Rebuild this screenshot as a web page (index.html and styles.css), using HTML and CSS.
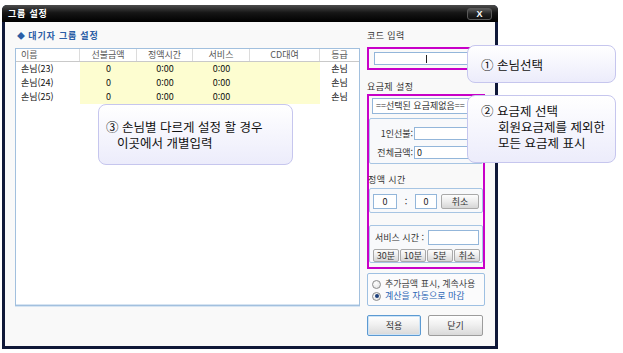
FILE: index.html
```html
<!DOCTYPE html>
<html lang="ko">
<head>
<meta charset="utf-8">
<title>그룹 설정</title>
<link rel="stylesheet" href="styles.css">
</head>
<body>
<div class="page">
  <div class="dialog">
    <div class="titlebar">
      <span class="title">그룹 설정</span>
      <span class="close">X</span>
    </div>
    <div class="body">
      <div class="left">
        <div class="section-title"><span class="diamond">◆</span> 대기자 그룹 설정</div>
        <div class="table">
          <div class="thead">
            <div class="th name">이름</div>
            <div class="th">선불금액</div>
            <div class="th">정액시간</div>
            <div class="th">서비스</div>
            <div class="th">CD대여</div>
            <div class="th last">등급</div>
          </div>
          <div class="row">
            <div class="td name">손님(23)</div>
            <div class="td y">0</div>
            <div class="td y">0:00</div>
            <div class="td y">0:00</div>
            <div class="td y"></div>
            <div class="td">손님</div>
          </div>
          <div class="row">
            <div class="td name">손님(24)</div>
            <div class="td y">0</div>
            <div class="td y">0:00</div>
            <div class="td y">0:00</div>
            <div class="td y"></div>
            <div class="td">손님</div>
          </div>
          <div class="row">
            <div class="td name">손님(25)</div>
            <div class="td y">0</div>
            <div class="td y">0:00</div>
            <div class="td y">0:00</div>
            <div class="td y"></div>
            <div class="td">손님</div>
          </div>
        </div>
      </div>
      <div class="right">
        <div class="label">코드 입력</div>
        <div class="hl code-box"><div class="input code-input"><span class="caret"></span></div></div>
        <div class="label plan-label">요금제 설정</div>
        <div class="hl plan-box">
          <div class="select">==선택된 요금제없음==<span class="arrow">▼</span></div>
          <div class="group amounts">
            <div class="field"><span class="flabel">1인선불:</span><span class="input wide"></span></div>
            <div class="field"><span class="flabel">전체금액:</span><span class="input wide">0</span></div>
          </div>
          <div class="label fixed-label">정액 시간</div>
          <div class="group fixed">
            <span class="input num n1">0</span><span class="colon">:</span><span class="input num n2">0</span><span class="btn cancel">취소</span>
          </div>
          <div class="group service">
            <div class="service-row"><span class="slabel">서비스 시간 :</span><span class="input sinput"></span></div>
            <div class="btn-row"><span class="btn">30분</span><span class="btn">10분</span><span class="btn">5분</span><span class="btn">취소</span></div>
          </div>
        </div>
        <div class="group radios">
          <div class="radio-row"><span class="radio"></span><span class="rtext">추가금액 표시, 계속사용</span></div>
          <div class="radio-row"><span class="radio checked"></span><span class="rtext blue">계산을 자동으로 마감</span></div>
        </div>
        <div class="actions">
          <span class="bigbtn focus">적용</span>
          <span class="bigbtn">닫기</span>
        </div>
      </div>
    </div>
  </div>

  <div class="callout c1">
    <div class="line">① 손님선택</div>
  </div>
  <div class="callout c2">
    <div class="line">② 요금제 선택</div>
    <div class="line ind">회원요금제를 제외한</div>
    <div class="line ind">모든 요금제 표시</div>
  </div>
  <div class="callout c3">
    <div class="line">③ 손님별 다르게 설정 할 경우</div>
    <div class="line ind">이곳에서 개별입력</div>
  </div>
</div>
</body>
</html>
```

FILE: styles.css
```css
* { box-sizing: border-box; }
html, body { margin: 0; padding: 0; background: #fff; }
body {
  font-family: "Noto Sans CJK KR", "Noto Sans", sans-serif;
  font-size: 9px;
  color: #222;
}
.page {
  position: relative;
  width: 623px;
  height: 353px;
  padding: 5px 0 0 2px;
}

/* dialog frame */
.dialog {
  width: 496px;
  height: 344px;
  background: #0f1838;
  border-radius: 5px 5px 0 0;
  padding: 0 3px 3px 3px;
  display: flex;
  flex-direction: column;
}
.titlebar {
  height: 17px;
  margin: 0 -3px;
  padding: 0 6px 0 6px;
  display: flex;
  align-items: center;
  justify-content: space-between;
  background: linear-gradient(#4c4c4c, #161616 45%, #000);
  border-radius: 5px 5px 0 0;
}
.title {
  color: #fff;
  font-weight: bold;
  font-size: 9px;
  line-height: 12px;
  letter-spacing: 0.8px;
}
.close {
  width: 25px;
  height: 12px;
  border: 1px solid #5a5a5a;
  border-radius: 3px;
  background: linear-gradient(#5a5a5a, #222 50%, #111);
  color: #fff;
  font-weight: bold;
  font-family: "Liberation Sans", sans-serif;
  font-size: 9px;
  line-height: 10px;
  text-align: center;
}
.body {
  flex: 1;
  background: #f9f9f9;
  display: grid;
  grid-template-columns: 345px 118px;
  column-gap: 7px;
  padding: 7px 10px 0 10px;
  align-items: start;
}

/* left: list */
.section-title {
  line-height: 14px;
  color: #2b5ea6;
  font-weight: bold;
  padding-left: 2px;
  letter-spacing: 0.8px;
}
.diamond { font-size: 8px; letter-spacing: 0; }
.table {
  margin-top: 5px;
  height: 258px;
  background: #fff;
  border: 1px solid #a2c0de;
  box-shadow: inset 0 -1px 0 #d6e4f2, 0 1px 0 #d6e4f2;
}
.thead, .row {
  display: grid;
  grid-template-columns: 64px 57px 56px 57px 70px 1fr;
}
.thead {
  height: 13px;
  border-bottom: 1px solid #c9c9c9;
}
.th {
  line-height: 12px;
  text-align: center;
  color: #555;
  border-right: 1px solid #dcdcdc;
}
.th.last { border-right: 0; }
.th.name, .td.name { text-align: left; padding-left: 5px; }
.row { height: 14px; }
.td {
  line-height: 14px;
  text-align: center;
  color: #111;
}
.td.y { background: #fdfdd0; }

/* right panel */
.label {
  line-height: 14px;
  color: #333;
  letter-spacing: 0.4px;
}
.hl {
  border: 2px solid #c800c8;
}
.code-box {
  margin-top: 4px;
  height: 23px;
  padding: 3px 5px;
}
.input {
  display: block;
  background: #fff;
  border: 1px solid #93b6da;
  height: 13px;
  line-height: 11px;
  padding-left: 2px;
  color: #222;
}
.code-input {
  display: flex;
  justify-content: center;
  align-items: center;
  padding-left: 0;
}
.caret {
  width: 1px;
  height: 8px;
  background: #222;
}
.plan-label { margin-top: 10px; }
.plan-box {
  height: 175px;
  padding: 2px 0 4px 0;
  display: flex;
  flex-direction: column;
}
.select {
  margin: 0 3px;
  height: 16px;
  background: #fff;
  border: 1px solid #93b6da;
  line-height: 14px;
  padding-left: 3px;
  position: relative;
  color: #333;
}
.arrow {
  position: absolute;
  right: 2px;
  top: 0;
  font-size: 6px;
  color: #555;
}
.group {
  border: 1px solid #a7c5e3;
  border-radius: 2px;
  background: #f8f9fb;
}
.amounts {
  margin-top: 4px;
  height: 46px;
  padding-top: 8px;
  display: flex;
  flex-direction: column;
  gap: 6px;
}
.field {
  display: flex;
  align-items: center;
  height: 13px;
}
.flabel {
  width: 43px;
  text-align: right;
  line-height: 13px;
  color: #333;
}
.input.wide {
  margin-left: 1px;
  width: 67px;
}
.fixed-label {
  margin-top: 10px;
  line-height: 12px;
  margin-left: -1px;
}
.fixed {
  margin-top: 2px;
  height: 25px;
  padding: 5px 0 0 3px;
  display: flex;
  align-items: flex-start;
}
.input.num {
  height: 15px;
  line-height: 13px;
  text-align: center;
  padding: 0;
}
.n1 { width: 24px; }
.n2 { width: 22px; }
.colon {
  width: 18px;
  text-align: center;
  line-height: 15px;
}
.btn {
  display: block;
  border: 1px solid #a9a9a9;
  border-radius: 2px;
  background: linear-gradient(#fdfdfd, #ececec 50%, #d6d6d6);
  text-align: center;
  color: #333;
}
.cancel {
  margin-left: 4px;
  width: 38px;
  height: 15px;
  line-height: 13px;
}
.service {
  margin-top: 12px;
  height: 38px;
  padding: 4px 0 0 3px;
}
.service-row {
  display: flex;
  align-items: center;
  height: 15px;
}
.slabel {
  width: 55px;
  padding-left: 2px;
  line-height: 15px;
  color: #333;
}
.sinput {
  width: 51px;
  height: 15px;
}
.btn-row {
  margin-top: 4px;
  display: flex;
  gap: 1px;
}
.btn-row .btn {
  width: 26px;
  height: 13px;
  line-height: 11px;
}
.radios {
  margin-top: 4px;
  height: 33px;
  padding: 4px 0 0 4px;
  background: #fbfbfc;
  border-color: #9ec0e2;
}
.radio-row {
  display: flex;
  align-items: center;
  height: 12px;
}
.radio {
  width: 9px;
  height: 9px;
  border-radius: 50%;
  border: 1px solid #8c8c8c;
  background: radial-gradient(circle at 40% 35%, #fff, #dcdcdc);
  margin-right: 4px;
  position: relative;
}
.radio.checked::after {
  content: "";
  position: absolute;
  left: 1.5px;
  top: 1.5px;
  width: 4px;
  height: 4px;
  border-radius: 50%;
  background: #1d3f7a;
}
.rtext {
  line-height: 12px;
  color: #444;
}
.rtext.blue { color: #2b66b5; }
.actions {
  margin-top: 9px;
  display: flex;
  gap: 7px;
}
.bigbtn {
  display: block;
  width: 54px;
  height: 21px;
  line-height: 19px;
  text-align: center;
  border: 1px solid #9c9c9c;
  border-radius: 2px;
  background: linear-gradient(#ffffff, #f0f0f0 45%, #d9d9d9);
  color: #333;
}
.bigbtn + .bigbtn { width: 55px; }
.bigbtn.focus {
  border-color: #5c9ad2;
  box-shadow: inset 0 0 0 1px #cfe4f6;
}

/* annotation callouts (overlay) */
.callout {
  position: absolute;
  border: 1px solid #c6c6ee;
  border-radius: 8px;
  background: linear-gradient(#ffffff, #ececfb);
  font-size: 12.5px;
  color: #111;
}
.callout .line {
  line-height: 16px;
  white-space: nowrap;
}
.c1 {
  left: 467px;
  top: 45px;
  width: 149px;
  height: 38px;
  padding: 11px 0 0 13px;
}
.c2 {
  left: 467px;
  top: 95px;
  width: 149px;
  height: 68px;
  padding: 7px 0 0 13px;
}
.c2 .ind { padding-left: 17px; }
.c3 {
  left: 98px;
  top: 104px;
  width: 195px;
  height: 61px;
  padding: 14px 0 0 7px;
}
.c3 .ind { padding-left: 11px; }
```
